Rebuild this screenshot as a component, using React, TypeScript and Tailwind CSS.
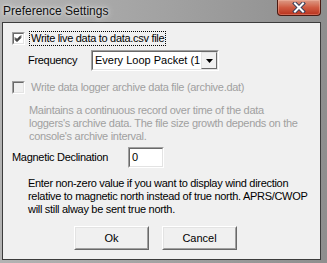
import { ReactNode } from "react";

const font = { fontFamily: '"Liberation Sans", Arial, sans-serif' };

function Sunken({ className = "", children }: { className?: string; children?: ReactNode }) {
  return (
    <div className={`border border-t-[#a0a0a0] border-l-[#a0a0a0] border-r-white border-b-white ${className}`}>
      <div className="h-full w-full border border-t-[#696969] border-l-[#696969] border-r-[#e3e3e3] border-b-[#e3e3e3]">
        {children}
      </div>
    </div>
  );
}

function CheckBox({ checked, disabled }: { checked?: boolean; disabled?: boolean }) {
  return (
    <Sunken className={`size-[13px] shrink-0 ${disabled ? "bg-[#f0f0f0]" : "bg-white"}`}>
      {checked && (
        <svg width="9" height="9" viewBox="0 0 9 9" className="block">
          <path d="M1 3.5 L3 5.5 L7 1.5 M1 4.5 L3 6.5 L7 2.5 M1 5.5 L3 7.5 L7 3.5" stroke="#000" strokeWidth="1" fill="none" />
        </svg>
      )}
    </Sunken>
  );
}

function Button({ label }: { label: string }) {
  return (
    <div className="h-[24px] w-[75px] border border-t-white border-l-white border-r-[#696969] border-b-[#696969]">
      <div className="flex h-full w-full items-center justify-center border border-t-[#e3e3e3] border-l-[#e3e3e3] border-r-[#a0a0a0] border-b-[#a0a0a0] bg-[#f0f0f0] text-[11px] text-black">
        {label}
      </div>
    </div>
  );
}

export default function App() {
  return (
    <div
      className="flex h-[263px] w-[327px] flex-col overflow-hidden bg-gradient-to-r from-[#b3b3b3] via-[#a2a2a2] to-[#8e8e8e]"
      style={font}
    >
      {/* title bar */}
      <div className="relative flex h-[22px] shrink-0 items-center pl-[3px]">
        <span className="text-[12px] leading-none text-[#101010] [text-shadow:0_0_6px_#e8e8e8,0_0_3px_#e8e8e8]">
          Preference Settings
        </span>
        <div className="absolute left-[277px] top-0 flex h-[16px] w-[44px] items-center justify-center rounded-b-[4px] border border-t-0 border-[#4a1a12] bg-gradient-to-b from-[#dc9a86] via-[#cf5b42] to-[#b8301c] shadow-[inset_0_0_0_1px_rgba(255,200,180,0.35)]">
          <svg width="14" height="11" viewBox="0 0 14 11">
            <path d="M3 1.5 L11 9.5 M11 1.5 L3 9.5" stroke="#3b3f58" strokeWidth="4" strokeLinecap="square" />
            <path d="M3 1.5 L11 9.5 M11 1.5 L3 9.5" stroke="#fff" strokeWidth="2" strokeLinecap="square" />
          </svg>
        </div>
      </div>

      {/* client area */}
      <div className="ml-[2px] mr-[6px] h-[238px] border border-[#3c3c3c] bg-[#f0f0f0] text-[11px] leading-[13px] tracking-[-0.3px] text-black">
        <div className="mt-[8px] flex h-[15px] items-center pl-[9px]">
          <CheckBox checked />
          <span className="ml-[4px] border border-dotted border-black px-[1px] leading-[13px]">
            Write live data to data.csv file
          </span>
        </div>

        <div className="mt-[4px] flex items-center pl-[25px]">
          <span className="w-[63px]">Frequency</span>
          <Sunken className="h-[21px] w-[128px] bg-white">
            <div className="flex h-full items-center">
              <span className="ml-[2px] flex-1 overflow-hidden whitespace-nowrap tracking-normal">Every Loop Packet (1</span>
              <div className="flex h-[17px] w-[16px] shrink-0 items-center justify-center border border-t-[#e3e3e3] border-l-[#e3e3e3] border-r-[#696969] border-b-[#696969] bg-[#f0f0f0]">
                <svg width="7" height="4" viewBox="0 0 7 4">
                  <path d="M0 0 H7 L3.5 4 Z" fill="#000" />
                </svg>
              </div>
            </div>
          </Sunken>
        </div>

        <div className="mt-[9px] flex h-[15px] items-center pl-[9px] text-[#a0a0a0]">
          <CheckBox disabled />
          <span className="ml-[4px] border border-transparent px-[1px]">
            Write data logger archive data file (archive.dat)
          </span>
        </div>

        <p className="mt-[9px] pl-[26px] text-[#a0a0a0]">
          Maintains a continuous record over time of the data
          <br />
          loggers's archive data. The file size growth depends on the
          <br />
          console's archive interval.
        </p>

        <div className="mt-[4px] flex items-center pl-[9px]">
          <span className="w-[116px]">Magnetic Declination</span>
          <Sunken className="h-[21px] w-[36px] bg-white">
            <div className="flex h-full items-center pl-[2px]">0</div>
          </Sunken>
        </div>

        <p className="mt-[9px] pl-[25px]">
          Enter non-zero value if you want to display wind direction
          <br />
          relative to magnetic north instead of true north. APRS/CWOP
          <br />
          will still alway be sent true north.
        </p>

        <div className="mt-[10px] flex gap-[13px] pl-[71px] tracking-normal">
          <Button label="Ok" />
          <Button label="Cancel" />
        </div>
      </div>
    </div>
  );
}
